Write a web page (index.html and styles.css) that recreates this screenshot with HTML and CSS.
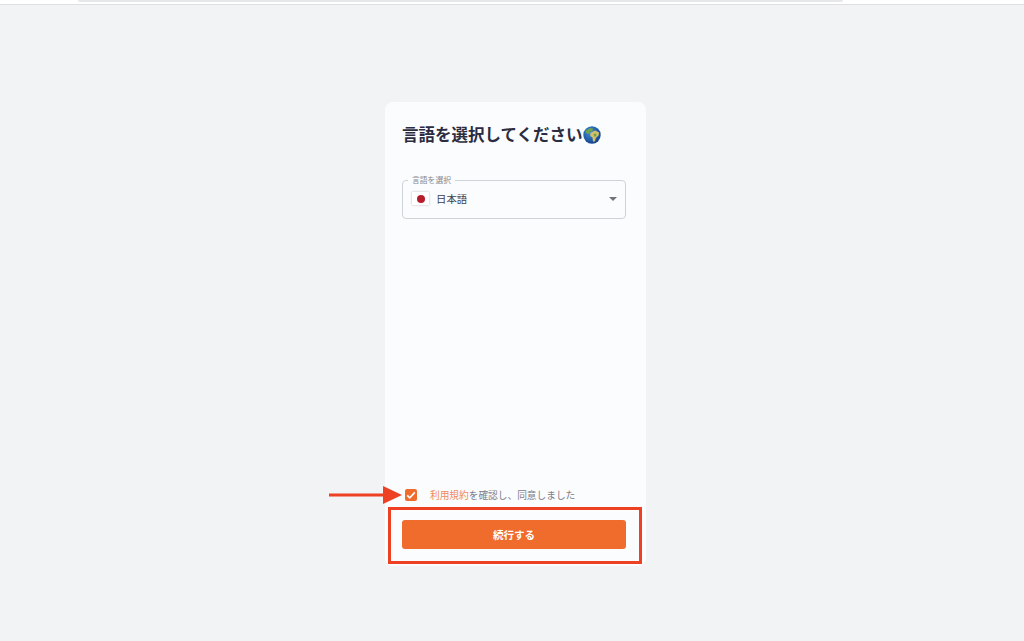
FILE: index.html
```html
<!DOCTYPE html>
<html lang="ja">
<head>
<meta charset="utf-8">
<title>言語を選択</title>
<link rel="stylesheet" href="styles.css">
</head>
<body>
<header class="topbar"><div class="topbar-pill"></div></header>
<main class="stage">
  <section class="card">
    <h1 class="title">言語を選択してください<svg class="globe" viewBox="0 0 18 18" aria-hidden="true"><defs><radialGradient id="sea" cx="40%" cy="35%" r="70%"><stop offset="0" stop-color="#3f8fdc"/><stop offset="1" stop-color="#123f88"/></radialGradient></defs><circle cx="9" cy="9" r="8.7" fill="url(#sea)"/><path d="M3 4.5 7 2 10 2.6 9.5 5 7 6 6.5 8 4 7.5 2.2 6.5Z" fill="#6fa24a"/><path d="M7.5 7 12 4.5 16 6.5 15.6 9.5 12.8 12 12 15.2 10 15.8 9.5 11.5 7.2 10Z" fill="#d4c06a"/><path d="M10.5 8 13 7.5 13.5 10 11.5 11Z" fill="#6fa24a"/></svg></h1>
    <div class="field">
      <span class="legend">言語を選択</span>
      <div class="flag"><span class="flag-dot"></span></div>
      <span class="value">日本語</span>
      <span class="caret"></span>
    </div>
    <div class="spacer"></div>
    <label class="agree">
      <span class="check"><svg viewBox="0 0 12 12" width="12" height="12" aria-hidden="true"><path d="M2.2 6.3 4.8 8.8 9.8 3.4" fill="none" stroke="#fff" stroke-width="1.6"/></svg></span>
      <span class="agree-text"><span class="link">利用規約</span>を確認し、同意しました</span>
    </label>
    <button class="continue" type="button">続行する</button>
  </section>
</main>
<svg class="arrow" viewBox="0 0 73 18" aria-hidden="true"><path d="M0 9H56" stroke="#ee4023" stroke-width="3"/><path d="M54 0 73 9 54 18Z" fill="#ee4023"/></svg>
<div class="highlight"></div>
</body>
</html>
```

FILE: styles.css
```css
* { box-sizing: border-box; }
html, body { margin: 0; height: 100%; }
body {
  position: relative;
  height: 641px;
  overflow: hidden;
  background: #f2f3f5;
  font-family: Inter, "Noto Sans CJK JP", sans-serif;
}
.topbar {
  height: 5px;
  background: #fff;
  border-bottom: 1px solid #dfe0e2;
  padding: 0 181px 0 78px;
}
.topbar-pill {
  height: 2px;
  background: #e6e7e9;
  border-radius: 0 0 4px 4px;
}
.stage {
  display: flex;
  justify-content: center;
  padding: 97px 0 0 7px;
}
.card {
  width: 261px;
  height: 464px;
  display: flex;
  flex-direction: column;
  padding: 22px 20px 17px 17px;
  background: #fbfcfe;
  border-radius: 8px;
}
.title {
  display: flex;
  align-items: center;
  margin: 0;
  height: 22px;
  font-size: 16.5px;
  line-height: 22px;
  font-weight: 700;
  color: #2b2c40;
  white-space: nowrap;
}
.globe { width: 18px; height: 18px; flex: none; }
.field {
  position: relative;
  display: flex;
  align-items: center;
  height: 39px;
  margin-top: 34px;
  padding: 0 0 2px 9px;
  border: 1px solid #cfd2d7;
  border-radius: 4px;
}
.legend {
  position: absolute;
  top: -6px;
  left: 5px;
  padding: 0 4px;
  background: #fbfcfe;
  font-size: 7.8px;
  line-height: 11px;
  color: #85888f;
}
.flag {
  display: flex;
  align-items: center;
  justify-content: center;
  width: 17px;
  height: 13px;
  background: #fff;
  box-shadow: 0 0 2px #b9bcc2;
}
.flag-dot {
  width: 8px;
  height: 8px;
  border-radius: 50%;
  background: #b71c2c;
}
.value {
  margin-left: 7px;
  font-size: 10.4px;
  color: #3d3f4a;
}
.caret {
  margin-left: auto;
  margin-right: 8px;
  border-left: 4px solid transparent;
  border-right: 4px solid transparent;
  border-top: 4px solid #71747b;
}
.spacer { flex: 1; }
.agree {
  display: flex;
  align-items: center;
  height: 14px;
  margin-bottom: 18px;
  padding-left: 3px;
}
.check {
  display: flex;
  align-items: center;
  justify-content: center;
  width: 12px;
  height: 12px;
  background: #ef6c2d;
  border-radius: 2px;
}
.agree-text {
  margin-left: 13px;
  font-size: 9.7px;
  color: #7d8087;
  white-space: nowrap;
}
.link { color: #f08a5c; }
.continue {
  height: 29px;
  padding: 0;
  border: 0;
  border-radius: 3px;
  background: #ef6c2d;
  color: #fff;
  font-family: inherit;
  font-size: 10.5px;
  font-weight: 700;
}
.arrow {
  position: absolute;
  left: 329px;
  top: 486px;
  width: 73px;
  height: 18px;
}
.highlight {
  position: absolute;
  left: 388px;
  top: 507px;
  width: 254px;
  height: 57px;
  border: 3px solid #ee4023;
}
```
